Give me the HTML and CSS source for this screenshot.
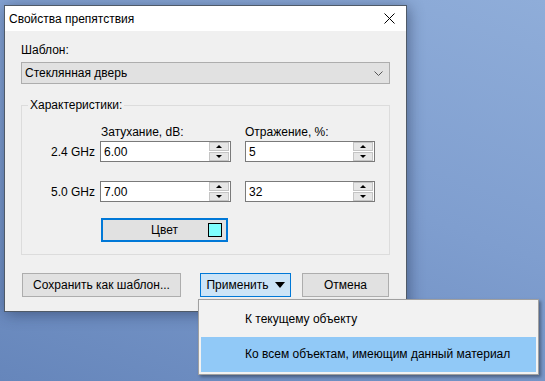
FILE: index.html
```html
<!DOCTYPE html>
<html lang="ru">

<head>
	<meta charset="utf-8">
	<title>Свойства препятствия</title>
	<link rel="stylesheet" href="styles.css">
</head>

<body>
	<div class="dialog">
		<div class="titlebar">
			<span class="title">Свойства препятствия</span>
			<svg class="close" width="11" height="11" viewBox="0 0 11 11">
				<path d="M0.5 0.5 L10.5 10.5 M10.5 0.5 L0.5 10.5" stroke="#000" stroke-width="1" fill="none" />
			</svg>
		</div>
		<div class="content">
			<div class="label">Шаблон:</div>
			<div class="combo">
				<span>Стеклянная дверь</span>
				<svg width="9" height="5" viewBox="0 0 9 5">
					<path d="M0.5 0.5 L4.5 4.5 L8.5 0.5" stroke="#555" stroke-width="1" fill="none" />
				</svg>
			</div>

			<fieldset class="group">
				<legend>Характеристики:</legend>
				<div class="heads">
					<span class="head">Затухание, dB:</span>
					<span class="head">Отражение, %:</span>
				</div>
				<div class="row">
					<span class="freq">2.4 GHz</span>
					<div class="spin"><span>6.00</span>
						<div class="arrows"><b class="up"></b><b class="down"></b></div>
					</div>
					<div class="spin second"><span>5</span>
						<div class="arrows"><b class="up"></b><b class="down"></b></div>
					</div>
				</div>
				<div class="row gap">
					<span class="freq">5.0 GHz</span>
					<div class="spin"><span>7.00</span>
						<div class="arrows"><b class="up"></b><b class="down"></b></div>
					</div>
					<div class="spin second"><span>32</span>
						<div class="arrows"><b class="up"></b><b class="down"></b></div>
					</div>
				</div>
				<div class="colorbtn">
					<span>Цвет</span>
					<i class="swatch"></i>
				</div>
			</fieldset>

			<div class="buttons">
				<div class="btn save">Сохранить как шаблон...</div>
				<div class="btn apply">Применить <i class="tri"></i></div>
				<div class="btn cancel">Отмена</div>
			</div>
		</div>
	</div>

	<div class="menu">
		<div class="item">К текущему объекту</div>
		<div class="item active">Ко всем объектам, имеющим данный материал</div>
	</div>
</body>

</html>
```

FILE: styles.css
```css
html,
body {
	margin: 0;
	height: 100%;
}

body {
	background: linear-gradient(200deg, #8fadd9 0%, #7f9ecf 45%, #6686bb 100%);
	font-family: "Liberation Sans", Arial, sans-serif;
	font-size: 12px;
	color: #000;
	overflow: hidden;
}

.dialog {
	position: absolute;
	left: 4px;
	top: 5px;
	width: 401px;
	height: 305px;
	border: 1px solid #4f5a68;
	background: #f0f0f0;
	box-shadow: 2px 2px 14px rgba(20, 30, 60, 0.45);
}

.titlebar {
	height: 25px;
	background: #fff;
	display: flex;
	align-items: center;
	justify-content: space-between;
	padding: 0 11px 0 4px;
}

.title {
	padding-top: 1px;
}

.content {
	padding: 11px 16px 0 16px;
}

.label {
	height: 16px;
	line-height: 16px;
}

.combo {
	margin-top: 4px;
	height: 20px;
	border: 1px solid #adadad;
	background: #e1e1e1;
	display: flex;
	align-items: center;
	justify-content: space-between;
	padding: 0 6px 0 3px;
}

.group {
	margin: 13px 0 0 0;
	padding: 0 0 12px 0;
	border: 1px solid #dcdcdc;
	min-width: 0;
}

.group legend {
	margin-left: 6px;
	padding: 0 2px;
	line-height: 16px;
}

.heads {
	margin-top: 11px;
	padding-left: 79px;
	display: flex;
	line-height: 16px;
}

.head {
	width: 144px;
}

.row {
	display: flex;
	align-items: center;
	margin-top: 1px;
}

.row.gap {
	margin-top: 19px;
}

.freq {
	width: 73px;
	margin-right: 5px;
	text-align: right;
}

.spin {
	width: 126px;
	height: 19px;
	border: 1px solid #7a7a7a;
	background: #fff;
	display: flex;
	align-items: center;
	justify-content: space-between;
	padding-left: 3px;
	box-sizing: content-box;
}

.spin span {
	padding-top: 1px;
}

.spin.second {
	margin-left: 14px;
	width: 125px;
}

.arrows {
	display: flex;
	flex-direction: column;
	gap: 1px;
	margin-right: 1px;
}

.arrows b {
	width: 18px;
	height: 7px;
	border: 1px solid #c4c4c4;
	background: #e6e6e6;
	display: flex;
	align-items: center;
	justify-content: center;
}

.arrows b::after {
	content: "";
	border-left: 3px solid transparent;
	border-right: 3px solid transparent;
}

.arrows .up::after {
	border-bottom: 3px solid #000;
}

.arrows .down::after {
	border-top: 3px solid #000;
}

.colorbtn {
	margin: 16px 0 0 79px;
	width: 123px;
	height: 20px;
	border: 2px solid #0078d7;
	background: #e1e1e1;
	display: flex;
	align-items: center;
	justify-content: center;
	position: relative;
}

.swatch {
	position: absolute;
	right: 4px;
	top: 3px;
	width: 12px;
	height: 12px;
	border: 1px solid #000;
	background: #80ffff;
}

.buttons {
	display: flex;
	margin-top: 18px;
}

.btn {
	height: 22px;
	border: 1px solid #adadad;
	background: #e1e1e1;
	display: flex;
	align-items: center;
	justify-content: center;
}

.save {
	margin-left: 1px;
	width: 157px;
}

.apply {
	margin-left: 19px;
	width: 89px;
	background: #cce4f7;
	border-color: #0078d7;
	gap: 6px;
}

.tri {
	border-left: 5px solid transparent;
	border-right: 5px solid transparent;
	border-top: 6px solid #000;
}

.cancel {
	margin-left: 11px;
	width: 85px;
}

.menu {
	position: absolute;
	left: 198px;
	top: 299px;
	width: 335px;
	padding: 2px;
	border: 1px solid #a0a0a0;
	background: #f2f2f2;
	box-shadow: 2px 2px 3px rgba(0, 0, 0, 0.35);
}

.item {
	height: 35px;
	line-height: 35px;
	padding-left: 44px;
}

.item.active {
	background: #91c9f7;
}
```
